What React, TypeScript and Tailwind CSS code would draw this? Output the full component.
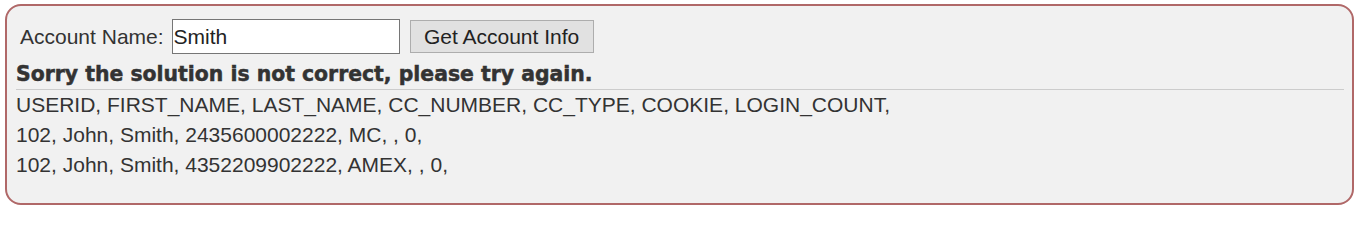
import React from "react";

export default function App() {
  const rows = [
    "USERID, FIRST_NAME, LAST_NAME, CC_NUMBER, CC_TYPE, COOKIE, LOGIN_COUNT,",
    "102, John, Smith, 2435600002222, MC, , 0,",
    "102, John, Smith, 4352209902222, AMEX, , 0,",
  ];
  return (
    <div className="w-[1359px] h-[211px] bg-white pt-[4px] px-[5px] font-['Liberation_Sans',Arial,sans-serif] text-[#333333]">
      <div className="h-[201px] border-2 border-[#b06868] rounded-[16px] bg-[#f1f1f1] pt-[13px] pl-[9px] pr-[8px]">
        <div className="flex items-center h-[35px] pl-[4px] text-[21px]">
          <span className="leading-[24px]">Account Name:</span>
          <input
            readOnly
            value="Smith"
            className="ml-[8px] w-[228px] h-[35px] border border-[#767676] bg-white px-[1px] text-[21px] text-[#222] outline-none font-['Liberation_Sans',Arial,sans-serif]"
          />
          <button className="ml-[10px] w-[184px] h-[33px] border border-[#adadad] bg-[#e1e1e1] text-[21px] text-[#222] font-['Liberation_Sans',Arial,sans-serif]">
            Get Account Info
          </button>
        </div>
        <div className="mt-[9px] text-[20.4px] leading-[23px] font-bold font-['DejaVu_Sans',sans-serif] [-webkit-text-stroke:0.5px_#333333]">
          Sorry the solution is not correct, please try again.
        </div>
        <div className="mt-[3px] border-t border-[#cccccc]" />
        <div className="text-[21px] leading-[30px]">
          {rows.map((r, i) => (
            <div key={i}>{r}</div>
          ))}
        </div>
      </div>
    </div>
  );
}
